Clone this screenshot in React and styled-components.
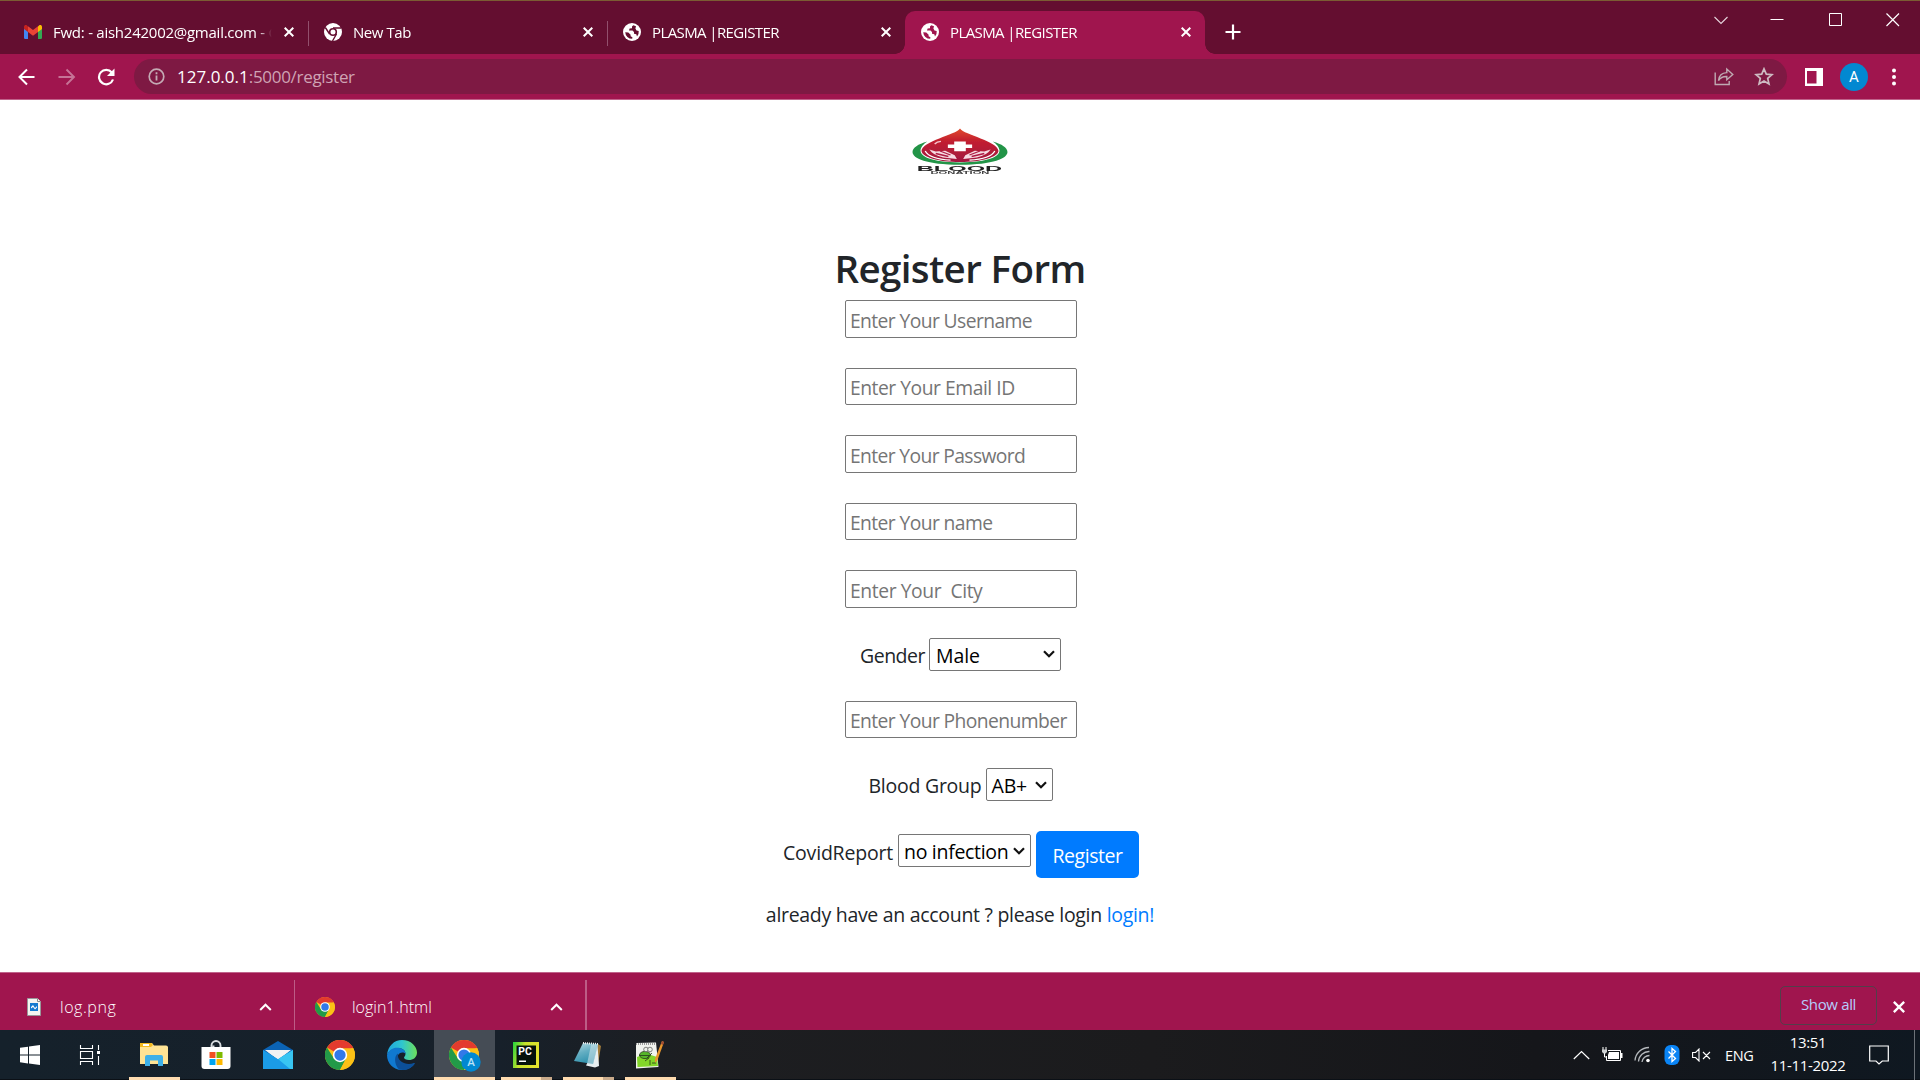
import React from "react";
import styled, { createGlobalStyle } from "styled-components";

const Global = createGlobalStyle`
  * { box-sizing: border-box; }
  body { margin: 0; overflow: hidden; background: #fff; }
  svg { display: block; flex: none; }
`;

const Screen = styled.div`
  width: 1920px;
  height: 1080px;
  display: flex;
  flex-direction: column;
  font-family: "Open Sans", "Noto Sans", sans-serif;
  color: #212529;
  white-space: pre;
`;

/* ---------- window frame ---------- */
const TabStrip = styled.div`
  height: 54px;
  flex: none;
  display: flex;
  align-items: flex-end;
  background: #640e30;
  border-top: 1px solid #7b5c33;
  padding-left: 9px;
`;
const Tab = styled.div`
  position: relative;
  width: ${(p) => p.$w}px;
  height: 43px;
  display: flex;
  align-items: center;
  padding: 0 14px 1px ${(p) => (p.$active ? 16 : 15)}px;
  color: #fff;
  border-radius: 10px 10px 0 0;
  background: ${(p) => (p.$active ? "#a0154e" : "transparent")};
  &::before, &::after {
    content: "";
    display: ${(p) => (p.$active ? "block" : "none")};
    position: absolute;
    bottom: 0;
    width: 10px;
    height: 10px;
  }
  &::before { left: -10px; background: radial-gradient(circle at 0 0, transparent 9.5px, #a0154e 10px); }
  &::after { right: -10px; background: radial-gradient(circle at 100% 0, transparent 9.5px, #a0154e 10px); }
`;
const TabTitle = styled.span`
  flex: 1;
  margin-left: 11px;
  margin-right: 10px;
  overflow: hidden;
  font-size: 15px;
  line-height: 22px;
  letter-spacing: ${(p) => p.$ls || 0}px;
  mask-image: linear-gradient(90deg, #000 93%, transparent 99%);
`;
const TabDivider = styled.i`
  width: 1px;
  height: 25px;
  margin-bottom: 8px;
  background: #92506d;
`;
const PlusBox = styled.div`
  height: 43px;
  display: flex;
  align-items: center;
  padding: 0 0 1px 20px;
`;
const WindowButtons = styled.div`
  align-self: flex-start;
  display: flex;
  gap: 41px;
  margin: 11px 19px 0 auto;
`;
const Toolbar = styled.div`
  height: 46px;
  flex: none;
  display: flex;
  align-items: center;
  background: #a0154e;
  border-bottom: 1px solid #c0638b;
  padding-left: 17px;
`;
const NavButtons = styled.div`
  display: flex;
  gap: 19.5px;
`;
const AddressBar = styled.div`
  width: 1653px;
  height: 35px;
  margin-left: 17px;
  display: flex;
  align-items: center;
  border-radius: 18px;
  background: #7e1943;
  padding: 0 13px 0 14px;
`;
const Url = styled.span`
  flex: 1;
  margin-left: 12px;
  font-size: 17px;
  line-height: 24px;
  letter-spacing: -0.3px;
  color: #cfa3b4;
  b { font-weight: 400; color: #fff; letter-spacing: 0; }
`;
const AddressIcons = styled.div`
  display: flex;
  gap: 20px;
`;
const ToolIcons = styled.div`
  display: flex;
  align-items: center;
  margin-left: 18px;
`;
const Avatar = styled.div`
  width: 28px;
  height: 28px;
  margin: 0 23px 0 17px;
  border-radius: 50%;
  background: #0288d1;
  color: #fff;
  font: 15px/28px Roboto, sans-serif;
  text-align: center;
`;

/* ---------- page ---------- */
const Page = styled.main`
  flex: 1;
  display: flex;
  flex-direction: column;
  align-items: center;
  background: #fff;
  padding-top: 28px;
`;
const Title = styled.h1`
  margin: 64px 0 0;
  height: 60px;
  font-size: 38.5px;
  font-weight: 600;
  line-height: 56px;
  letter-spacing: -0.6px;
`;
const Form = styled.form`
  display: flex;
  flex-direction: column;
  align-items: center;
  gap: 30px;
  padding-left: 2px;
`;
const Field = styled.input`
  width: 232px;
  height: 37.5px;
  border: 1px solid #767676;
  border-radius: 2px;
  background: #fff;
  outline: 0;
  padding: 3px 4px 0;
  font: 19.3px "Open Sans", "Noto Sans", sans-serif;
  letter-spacing: ${(p) => p.$ls}px;
  &::placeholder { color: #757575; opacity: 1; }
`;
const Row = styled.div`
  display: flex;
  align-items: flex-start;
  gap: 5px;
  height: ${(p) => p.$h}px;
  padding-right: ${(p) => p.$shift || 0}px;
`;
const Label = styled.label`
  width: ${(p) => p.$w}px;
  margin-top: ${(p) => p.$top}px;
  font-size: 19.5px;
  line-height: 30px;
  letter-spacing: ${(p) => p.$ls}px;
`;
const Select = styled.div`
  width: ${(p) => p.$w}px;
  height: 33px;
  margin-top: ${(p) => p.$top || 0}px;
  display: flex;
  align-items: center;
  justify-content: space-between;
  border: 1px solid #767676;
  border-radius: 2px;
  padding: 3px 5px 0 ${(p) => p.$pad}px;
  color: #000;
  font-size: 19.5px;
  line-height: 28px;
  letter-spacing: ${(p) => p.$ls}px;
  svg { margin-top: -3px; }
`;
const Submit = styled.button`
  width: 103px;
  height: 47px;
  border: 0;
  border-radius: 5px;
  background: #007bff;
  color: #fff;
  padding: 1px 0 0;
  font: 19.5px "Open Sans", "Noto Sans", sans-serif;
  letter-spacing: -0.45px;
`;
const Foot = styled.p`
  margin: 22px 0 0;
  font-size: 19.5px;
  line-height: 30px;
  letter-spacing: -0.3px;
  a { color: #007bff; }
`;

/* ---------- downloads ---------- */
const Downloads = styled.div`
  height: 58px;
  flex: none;
  display: flex;
  background: #a0154e;
  border-top: 1px solid #c0638b;
  padding-top: 7px;
`;
const Download = styled.div`
  width: ${(p) => p.$w}px;
  display: flex;
  align-items: center;
  border-right: ${(p) => p.$line}px solid #bd5c86;
  padding: 4px ${(p) => p.$right}px 0 ${(p) => p.$left}px;
  color: #fff;
  span {
    flex: 1;
    margin-left: ${(p) => p.$gap}px;
    font: 300 16px/22px "Open Sans", "Noto Sans", sans-serif;
    letter-spacing: ${(p) => p.$ls}px;
  }
`;
const ShowAll = styled.div`
  width: 97px;
  height: 39px;
  margin: 6px 16px 0 auto;
  border: 1px solid #533f4a;
  border-radius: 5px;
  color: #b5cdfb;
  text-align: center;
  font-size: 15px;
  font-weight: 500;
  line-height: 35px;
  letter-spacing: -0.35px;
`;
const CloseShelf = styled.div`
  margin: 21px 15px 0 0;
`;

/* ---------- taskbar ---------- */
const Taskbar = styled.div`
  height: 50px;
  flex: none;
  display: flex;
  background: linear-gradient(90deg, #15212b 0, #17202a 26%, #1d1e21 36%, #1b1b1d 60%, #15161a 80%, #0f1821 100%);
  border-bottom: 1px solid #0b1016;
`;
const TaskCell = styled.div`
  width: ${(p) => p.$w || 62}px;
  height: 50px;
  display: flex;
  flex-direction: column;
  align-items: center;
  justify-content: space-between;
  padding-top: 10px;
  margin-right: ${(p) => p.$mr || 0}px;
  background: ${(p) => (p.$active ? "#454c55" : "transparent")};
`;
const Underline = styled.i`
  width: ${(p) => p.$w}px;
  height: 3px;
  background: ${(p) => (p.$stack ? "linear-gradient(90deg,#ffdcb0 40px,#c9ab8c 40px)" : "#ffdcb0")};
`;
const Tray = styled.div`
  display: flex;
  align-items: center;
  margin-left: auto;
  color: #fff;
`;
const Lang = styled.span`
  width: 29px;
  margin: 1px 16px 0 13px;
  font-size: 14.5px;
  letter-spacing: -0.4px;
`;
const Clock = styled.div`
  width: 76px;
  text-align: center;
  font-size: 15px;
  line-height: 23px;
  letter-spacing: -0.35px;
  margin-top: -2px;
`;
const Gap = styled.i`
  width: ${(p) => p.$w}px;
`;
const DesktopEdge = styled.i`
  width: 6px;
  height: 50px;
  margin-left: 25px;
  border-left: 1px solid #6c7278;
`;

/* ---------- icons ---------- */
const Cross = ({ s = 10, w = 2 }) => (
  <svg width={s} height={s} viewBox="0 0 10 10" stroke="#fff" strokeWidth={w} fill="none"><path d="M.7.7l8.6 8.6M9.3.7L.7 9.3" /></svg>
);
const Gmail = () => (
  <svg width="18" height="14" viewBox="0 0 18 14">
    <path d="M0 2v10.800q0 1.200 1.200 1.200H4V5z" fill="#4285f4" />
    <path d="M18 2v10.800q0 1.200-1.200 1.200H14V5z" fill="#34a853" />
    <path d="M14 1.400V7l4-3V2c0-2-2-2.500-3-1.500z" fill="#fbbc04" />
    <path d="M4 1.400V7L0 4V2C0 0 2-.5 3 .5z" fill="#c5221f" />
    <path d="M4 1.200l5 3.900 5-3.900V7l-5 3.800L4 7z" fill="#ea4335" />
  </svg>
);
const ChromeMono = () => (
  <svg width="18" height="18" viewBox="0 0 18 18">
    <circle cx="9" cy="9" r="9" fill="#fff" />
    <circle cx="9" cy="9" r="3.300" fill="none" stroke="#640e30" strokeWidth="1.600" />
    <path d="M9 5h8.200M5.600 11L1.300 4.500M12.500 11l-4 7" stroke="#640e30" strokeWidth="1.400" />
  </svg>
);
const Globe = ({ bg }) => (
  <svg width="18" height="18" viewBox="0 0 18 18">
    <circle cx="9" cy="9" r="9" fill="#fff" />
    <path d="M10.300 2.200L9 3.400 9 5.200 6.600 5.600 6 7.500 9.500 7.500 11 9 11 10.800 13.300 11.200 14 13.500A6.800 6.800 0 0 0 15.700 8L13.500 7.600 12.400 5.600 13 3.300A7 7 0 0 0 10.300 2.200zM2.200 9.200L5.300 9.600 7.600 11.800 7.600 13.300 9.400 14.200 9.200 15.800A7 7 0 0 1 2.200 9.200z" fill={bg} />
  </svg>
);
const Chrome = ({ size }) => (
  <svg width={size} height={size} viewBox="0 0 48 48">
    <circle cx="24" cy="24" r="24" fill="#fbc116" />
    <path d="M24 24L3.200 12A24 24 0 0 1 44.800 12z" fill="#e33b2e" />
    <path d="M24 13h21.300a24 24 0 0 0-3.600-5z" fill="#e33b2e" />
    <path d="M3.200 12A24 24 0 0 0 24 48L34 30 24 24 14.500 30z" fill="#229a48" />
    <path d="M24 48L33.500 29.500 24 24 24 13H45.300A24 24 0 0 1 24 48z" fill="#fbc116" />
    <circle cx="24" cy="24" r="11.500" fill="#fff" />
    <circle cx="24" cy="24" r="9" fill="#3279e8" />
  </svg>
);
const Caret = () => (
  <svg width="12" height="8" viewBox="0 0 12 8" fill="none" stroke="#111" strokeWidth="2.200"><path d="M1 1.200l5 5 5-5" /></svg>
);
const ShelfCaret = () => (
  <svg width="13" height="8" viewBox="0 0 13 8" fill="none" stroke="#fff" strokeWidth="2"><path d="M1.200 7l5.300-5.300L11.800 7" /></svg>
);

const LogoText = styled.text`
  font-family: "Liberation Sans", sans-serif;
  font-weight: 700;
`;
const Logo = () => (
  <svg width="116" height="48" viewBox="906 128 110 48" preserveAspectRatio="none">
    <defs>
      <linearGradient id="drop" x1="0" y1="0" x2="0" y2="1">
        <stop offset="0" stopColor="#e04a2c" /><stop offset=".35" stopColor="#c4202f" /><stop offset="1" stopColor="#a01840" />
      </linearGradient>
      <filter id="soft" x="-5%" y="-5%" width="110%" height="110%"><feGaussianBlur stdDeviation=".75 .6" /></filter>
    </defs>
    <g filter="url(#soft)">
      <path d="M930 141.500C907 148 909 164.500 961 164.800C1013 164.500 1015 148 992 141.500C1003 149 1004 162 961 162.400C918 162 919 149 930 141.500z" fill="#249447" />
      <path d="M961 128.500C965 135 997 141 997.500 151C997 157 982 162 961 162C940 162 925 157 924.500 151C925 141 957 135 961 128.500z" fill="url(#drop)" />
      <path d="M928 151q4 8 24 9.200M994 151q-4 8-24 9.200" stroke="#fff" strokeWidth="1.200" fill="none" />
      <path d="M955.500 141.500h11v3h6v3.600H966.500v3.200h-11v-3.200h-6v-3.600h6z" fill="#fff" />
      <path d="M932 149.500l6 2 9-.8 9 4.500 2 3.800-13-1.500q-10-2.500-13-8zM990 149.500l-6 2-9-.8-9 4.500-2 3.800 13-1.500q10-2.500 13-8z" fill="#f6dbe2" />
      <path d="M938 153.500l12 3M984 153.500l-12 3M942 151l10 4M980 151l-10 4" stroke="#ae1d45" strokeWidth="1.300" />
      <path d="M937 144q2-2.500 6-2.700" stroke="#f5c3cd" strokeWidth="1.300" fill="none" />
      <LogoText x="920" y="170.900" fontSize="6.500" textLength="81" lengthAdjust="spacingAndGlyphs" fill="#222">BLOOD</LogoText>
      <LogoText x="933" y="174.400" fontSize="3.600" textLength="56" lengthAdjust="spacingAndGlyphs" fill="#444">DONATION</LogoText>
    </g>
  </svg>
);

const Start = () => (
  <svg width="30" height="30" viewBox="0 0 30 30" fill="#fff"><path d="M5 7.800l8-1.100v7.800H5zM14 6.500L25 5v9.500H14zM5 15.500h8v7.900l-8-1.200zM14 15.500h11V25l-11-1.500z" /></svg>
);
const TaskView = () => (
  <svg width="30" height="30" viewBox="0 0 30 30" fill="none" stroke="#fff" strokeWidth="1.100"><path d="M5.500 5v3.500h12V5M5.500 25v-3.500h12V25M5.500 11.500h12v7h-12zM23.500 5v5M23.500 16v9" /><path d="M22 11h3v3h-3z" fill="#fff" stroke="none" /></svg>
);
const Folder = () => (
  <svg width="30" height="30" viewBox="0 0 30 30"><path d="M1 3h12l2 2.500h12q2 0 2 2V24H1z" fill="#ffe394" /><path d="M1 3h11.500l1.500 2-2 2H1z" fill="#f3b91f" /><path d="M4 4h6v2H4z" fill="#fff" /><path d="M1 7h28v17H1z" fill="#ffe394" /><path d="M6 26V17q0-2 2-2h14q2 0 2 2v9h-5v-5.500h-8V26z" fill="#3eb0e8" /></svg>
);
const Store = () => (
  <svg width="30" height="30" viewBox="0 0 30 30"><path d="M10.500 8V5.500a4.500 4.500 0 0 1 9 0V8M12.500 8V5.500" fill="none" stroke="#d9dde0" strokeWidth="1.900" /><path d="M.5 7h29v19q0 3-3 3h-23q-3 0-3-3z" fill="#fff" /><path d="M8.500 12h6v6h-6z" fill="#f25022" /><path d="M15.500 12h6v6h-6z" fill="#7fba00" /><path d="M8.500 19h6v6h-6z" fill="#00a4ef" /><path d="M15.500 19h6v6h-6z" fill="#ffb900" /></svg>
);
const Mail = () => (
  <svg width="30" height="30" viewBox="0 0 30 30"><path d="M0 10L15 1l15 9v6H0z" fill="#0b63b5" /><path d="M2 10h26L15 20z" fill="#efefef" /><path d="M0 10l15 9 15-9v19H0z" fill="#1b9be6" /><path d="M15 19l15-9v19h-3z" fill="#38c5f2" /><path d="M3 10h24L15 19z" fill="#f3f3f3" /></svg>
);
const Edge = () => (
  <svg width="30" height="30" viewBox="0 0 30 30">
    <defs><linearGradient id="edgeTop"><stop offset="0" stopColor="#1fa6e0" /><stop offset=".5" stopColor="#2fc6cf" /><stop offset="1" stopColor="#6de05a" /></linearGradient></defs>
    <path d="M0 15C1 6 7 0 15 0c9 0 15 6.500 15 12.500 0 5-4 7.500-8 7.500-3 0-5-1-5-2.200 0-1 1.500-1.500 1.500-4C18.500 9 12 7 8 8.500 4 9.500 1.500 12 0 15z" fill="url(#edgeTop)" />
    <path d="M0 15C2 10 6 7.700 10 7.800c5 0 8.500 2.500 8.500 6-2-2.500-6.500-1.500-7.500 1.500-1 4 2 9 8 9.700 3.500.3 6-.8 8.500-2C25 27.500 20.500 30 15 30 6 30 0 23 0 15z" fill="#1079d0" />
    <path d="M11 13.500C7 16 7 24 12 29.500 20 31.500 26 27 28 23.200c-1-.7-2 .8-6 .8-6 0-11-4-11-8z" fill="#0c4f98" />
  </svg>
);
const BadgeText = styled.text`
  font-family: Roboto, "Noto Sans", sans-serif;
  font-weight: ${(p) => p.$weight || 500};
`;
const ChromeBadge = () => (
  <svg width="32" height="32" viewBox="0 0 32 32">
    <g transform="translate(0 0)"><Chrome size={30} /></g>
    <circle cx="22" cy="22" r="9.700" fill="#0288d1" />
    <BadgeText x="22" y="26" fontSize="11.500" textAnchor="middle" fill="#b8e2f8">A</BadgeText>
  </svg>
);
const PyCharm = () => (
  <svg width="30" height="30" viewBox="0 0 30 30">
    <defs><linearGradient id="pc" x2="1" y2=".3"><stop offset="0" stopColor="#21d33d" /><stop offset=".45" stopColor="#c8e22c" /><stop offset="1" stopColor="#e3e32d" /></linearGradient></defs>
    <path d="M2 2h26v26H2z" fill="url(#pc)" /><path d="M5.500 5.500h19.500v19.500H5.500z" fill="#06120b" />
    <BadgeText $weight={700} x="7.200" y="15.300" fontSize="10" textLength="13.500" lengthAdjust="spacingAndGlyphs" fill="#fff">PC</BadgeText>
    <path d="M8 20.500h7v1.500H8z" fill="#fff" />
  </svg>
);
const Notepad = () => (
  <svg width="30" height="30" viewBox="0 0 30 30">
    <defs><linearGradient id="np" x2=".4" y2="1"><stop offset="0" stopColor="#b9dce3" /><stop offset=".5" stopColor="#65afc3" /><stop offset="1" stopColor="#2f91ad" /></linearGradient></defs>
    <path d="M25 4l3 2-3 18-3 3z" fill="#a27c3b" /><path d="M24.500 4.500L26 26l-4 1.500-9-2z" fill="#e8eef0" />
    <path d="M10 3l15 1-5 20L1 21z" fill="url(#np)" /><path d="M18 5l7 0-5 20-6-1z" fill="#d6e8ec" opacity=".55" />
    <path d="M10 3l15 1" stroke="#eee" strokeWidth="2" strokeDasharray="1 1" />
  </svg>
);
const NotepadPlus = () => (
  <svg width="30" height="30" viewBox="0 0 30 30">
    <path d="M1 3l20-.5L23.500 27 1 28.500z" fill="#f1f3ee" /><path d="M2 17q9-5 20 0l1 9-20.500 1z" fill="#83d62a" />
    <path d="M1 4h20" stroke="#999" strokeWidth="2" strokeDasharray="1 1" />
    <ellipse cx="10" cy="15" rx="5.500" ry="3.600" fill="#56b52a" stroke="#243d18" strokeWidth=".8" />
    <circle cx="11" cy="9.500" r="2.300" fill="#eef2ea" stroke="#555" strokeWidth=".7" /><circle cx="15" cy="9.500" r="2.300" fill="#eef2ea" stroke="#555" strokeWidth=".7" />
    <path d="M4 15.500h10M12 18l5-5M10 21l4-3M15 20v5M17 23h4" stroke="#26371b" strokeWidth=".8" fill="none" />
    <path d="M27 1l2 1-6.500 18-2.500 3 0-4z" fill="#e9962b" /><path d="M27 1l2 1-1 3-2-1z" fill="#a04a35" />
  </svg>
);

const fields = [
  ["Enter Your Username", -0.6],
  ["Enter Your Email ID", -0.47],
  ["Enter Your Password", -0.63],
  ["Enter Your name", -0.6],
  ["Enter Your  City", -0.4],
];

export default function App() {
  return (
    <Screen>
      <Global />
      <TabStrip>
        <Tab $w={299}><Gmail /><TabTitle $ls={-0.25}>Fwd: - aish242002@gmail.com - G</TabTitle><Cross /></Tab>
        <TabDivider />
        <Tab $w={298}><ChromeMono /><TabTitle $ls={-0.45}>New Tab</TabTitle><Cross /></Tab>
        <TabDivider />
        <Tab $w={297}><Globe bg="#640e30" /><TabTitle $ls={-0.6}>PLASMA |REGISTER</TabTitle><Cross /></Tab>
        <Tab $w={300} $active><Globe bg="#a0154e" /><TabTitle $ls={-0.6}>PLASMA |REGISTER</TabTitle><Cross /></Tab>
        <PlusBox>
          <svg width="16" height="16" viewBox="0 0 16 16" stroke="#fff" strokeWidth="2.200"><path d="M8 .5v15M.5 8h15" /></svg>
        </PlusBox>
        <WindowButtons>
          <svg width="15" height="16" viewBox="0 0 15 16" fill="none" stroke="#e5d5dc" strokeWidth="1.100"><path d="M.5 5l6.500 6.500L13.500 5" /></svg>
          <svg width="17" height="16" viewBox="0 0 17 16" stroke="#fff"><path d="M.5 7.500h13" /></svg>
          <svg width="16" height="16" viewBox="0 0 16 16" fill="none" stroke="#fff"><path d="M1.500 1.500h12v12h-12z" /></svg>
          <svg width="16" height="16" viewBox="0 0 16 16" fill="none" stroke="#fff" strokeWidth="1.200"><path d="M1.500 1.500l12.500 12.500M14 1.500L1.500 14" /></svg>
        </WindowButtons>
      </TabStrip>
      <Toolbar>
        <NavButtons>
          <svg width="20" height="18" viewBox="0 0 20 18" fill="none" stroke="#fff" strokeWidth="2"><path d="M17.500 9H3M10 1.500L2.500 9l7.500 7.500" /></svg>
          <svg width="19" height="18" viewBox="0 0 19 18" fill="none" stroke="#c67396" strokeWidth="1.900"><path d="M1.500 9h15M9.500 1.500L17 9 9.500 16.500" /></svg>
          <svg width="22" height="18" viewBox="0 0 22 18"><path d="M18 11.500A7.200 7.200 0 1 1 16.800 4.500" fill="none" stroke="#fff" strokeWidth="2.200" /><path d="M19.500.5v7.500H12z" fill="#fff" /></svg>
        </NavButtons>
        <AddressBar>
          <svg width="17" height="17" viewBox="0 0 17 17" fill="none" stroke="#c4aab4"><circle cx="8.500" cy="8.500" r="7.300" strokeWidth="1.700" /><path d="M8.500 7.500v5M8.500 4.300v1.900" strokeWidth="1.800" /></svg>
          <Url><b>127.0.0.1</b>:5000/register</Url>
          <AddressIcons>
            <svg width="20" height="19" viewBox="0 0 20 19" fill="none" stroke="#bfaab2" strokeWidth="1.400"><path d="M1.200 5.500v12h14v-3.500M4.500 13.500C5 8.500 8 5.800 12.800 5.600V2l6 5.500-6 5.300V9.500C9 9.300 6.500 10.500 4.500 13.500z" /></svg>
            <svg width="20" height="19" viewBox="0 0 20 19" fill="none" stroke="#cdbbc2" strokeWidth="1.700"><path d="M10 1.800l2.300 5.300 5.700.5-4.300 3.800 1.300 5.600-5-3-5 3 1.300-5.600L2 7.600l5.700-.5z" /></svg>
          </AddressIcons>
        </AddressBar>
        <ToolIcons>
          <svg width="18" height="18" viewBox="0 0 18 18"><path d="M0 0h18v18H0zM2 3v12.500h9.500V3z" fill="#fff" fillRule="evenodd" /></svg>
          <Avatar>A</Avatar>
          <svg width="6" height="20" viewBox="0 0 6 20" fill="#fff"><circle cx="3" cy="3.500" r="2" /><circle cx="3" cy="10" r="2" /><circle cx="3" cy="16.500" r="2" /></svg>
        </ToolIcons>
      </Toolbar>

      <Page>
        <Logo />
        <Title>Register Form</Title>
        <Form>
          {fields.map(([t, ls]) => <Field key={t} placeholder={t} $ls={ls} readOnly />)}
          <Row $h={33} $shift={1}><Label $w={64} $top={3} $ls={-0.5}>Gender</Label><Select $w={132} $pad={6} $ls={-0.1}>Male<Caret /></Select></Row>
          <Field placeholder="Enter Your Phonenumber" $ls={-0.6} readOnly />
          <Row $h={33} $shift={1}><Label $w={112} $top={3} $ls={-0.25}>Blood Group</Label><Select $w={67} $pad={5} $ls={-0.2}>AB+<Caret /></Select></Row>
          <Row $h={47}><Label $w={110} $top={7} $ls={-0.2}>CovidReport</Label><Select $w={133} $top={3} $pad={5} $ls={-0.3}>no infection<Caret /></Select><Submit type="button">Register</Submit></Row>
        </Form>
        <Foot>already have an account ? please login <a>login!</a></Foot>
      </Page>

      <Downloads>
        <Download $w={295} $line={1} $left={27} $right={22} $gap={19} $ls={0.55}>
          <svg width="14" height="18" viewBox="0 0 14 18"><path d="M.5.500h10l3 3v14H.5z" fill="#f4f4f1" stroke="#99979a" /><path d="M10.500.500v3h3" fill="#fff" stroke="#888" /><path d="M3 5h8v8H3z" fill="#1479cf" /><path d="M4 9l2-2 2 3 2-2v1.500L8 11.500 6 9 4 10.500z" fill="#fff" /></svg>
          <span>log.png</span><ShelfCaret />
        </Download>
        <Download $w={292} $line={2} $left={20} $right={22} $gap={17} $ls={0}>
          <Chrome size={20} /><span>login1.html</span><ShelfCaret />
        </Download>
        <ShowAll>Show all</ShowAll>
        <CloseShelf><Cross s={12} w={2} /></CloseShelf>
      </Downloads>

      <Taskbar>
        <TaskCell $w={60}><Start /></TaskCell>
        <TaskCell $w={60} $mr={3}><TaskView /></TaskCell>
        <TaskCell><Folder /><Underline $w={51} /></TaskCell>
        <TaskCell><Store /></TaskCell>
        <TaskCell><Mail /></TaskCell>
        <TaskCell><Chrome size={30} /></TaskCell>
        <TaskCell $mr={1}><Edge /></TaskCell>
        <TaskCell $active $w={61}><ChromeBadge /><Underline $w={61} /></TaskCell>
        <TaskCell><PyCharm /><Underline $w={51} $stack /></TaskCell>
        <TaskCell><Notepad /><Underline $w={51} $stack /></TaskCell>
        <TaskCell><NotepadPlus /><Underline $w={51} /></TaskCell>
        <Tray>
          <svg width="17" height="10" viewBox="0 0 17 10" fill="none" stroke="#fff" strokeWidth="1.200"><path d="M.8 9l7.700-7.500L16.200 9" /></svg>
          <Gap $w={11} />
          <svg width="22" height="16" viewBox="0 0 22 16"><path d="M7 3.500h12.500v10H5.500V9" fill="none" stroke="#fff" /><path d="M8 5h10v7H7V8z" fill="#fff" /><path d="M20 6h1.500v5H20z" fill="#fff" /><path d="M2 0v3M5 0v3M3.500 6v4H5" fill="none" stroke="#fff" /><path d="M1 2.500h5V5L4.500 6.500h-2L1 5z" fill="#cfd2d4" /></svg>
          <Gap $w={11} />
          <svg width="17" height="17" viewBox="0 0 17 17" fill="none" stroke="#b5b9bd" strokeWidth="1.300"><path d="M1 14.500A14 14 0 0 1 15 1.500M4.500 15.500A10.500 10.500 0 0 1 15.500 5.500M8 16A7.500 7.500 0 0 1 15.500 9.500" /><circle cx="14" cy="14.500" r="1.800" fill="#fff" stroke="none" /></svg>
          <Gap $w={13} />
          <svg width="16" height="20" viewBox="0 0 16 20"><rect x=".5" width="15" height="20" rx="6" fill="#0a84f5" /><path d="M4.500 6.500l7 7L8 16.500v-13l3.500 3-7 7" fill="none" stroke="#fff" strokeWidth="1.300" /></svg>
          <Gap $w={12} />
          <svg width="20" height="14" viewBox="0 0 20 14" fill="none" stroke="#fff" strokeWidth="1.100"><path d="M.6 4.500h3L7 1v12L3.600 9.500h-3zM11 4l7 7M18 4l-7 7" /></svg>
          <Lang>ENG</Lang>
          <Clock><div>13:51</div><div>11-11-2022</div></Clock>
          <Gap $w={23} />
          <svg width="20" height="20" viewBox="0 0 20 20" fill="none" stroke="#fff" strokeWidth="1.200"><path d="M.7 1h18.600v15h-6L10 19l-3-3H.7z" /></svg>
          <DesktopEdge />
        </Tray>
      </Taskbar>
    </Screen>
  );
}
